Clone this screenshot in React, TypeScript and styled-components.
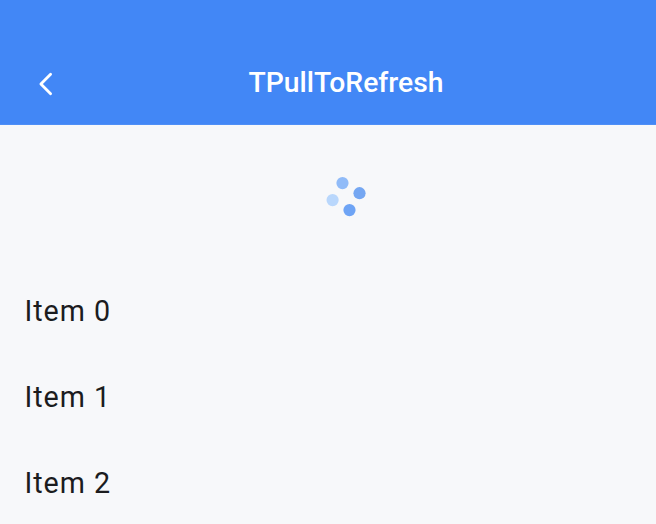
import React from "react";
import styled, { createGlobalStyle } from "styled-components";

const GlobalStyle = createGlobalStyle`
  * { box-sizing: border-box; }
  body { margin: 0; background: #f7f8fa; }
`;

const Screen = styled.div`
  width: 656px;
  height: 524px;
  overflow: hidden;
  background: #f7f8fa;
  font-family: Roboto, sans-serif;
`;

const AppBar = styled.header`
  display: grid;
  grid-template-columns: 92px 508px 56px;
  align-items: center;
  height: 125px;
  padding-top: 41px;
  border-bottom: 1px solid #4f8ff6;
  background: #4287f6;
  color: #fff;
`;

const BackButton = styled.button`
  display: flex;
  padding: 3px 0 0 36px;
  border: 0;
  background: none;
  color: inherit;
`;

const Title = styled.h1`
  margin: 0;
  font-size: 28.3px;
  font-weight: 500;
  line-height: 40px;
  text-align: center;
`;

const RefreshArea = styled.div`
  display: flex;
  justify-content: center;
  height: 143px;
  padding: 48px 0 0 36px;
`;

const List = styled.ul`
  margin: 0;
  padding: 0;
  list-style: none;
`;

const Item = styled.li`
  display: flex;
  align-items: center;
  height: 86px;
  padding-left: 24.4px;
  color: #1b1c1e;
  font-size: 28.7px;
  letter-spacing: 1px;
`;

export default function App() {
  return (
    <Screen>
      <GlobalStyle />
      <AppBar>
        <BackButton aria-label="Back">
          <svg width="20" height="26" viewBox="0 0 20 26" fill="none">
            <path
              d="M14.6 3.2 L4.9 13 L14.6 22.8"
              stroke="currentColor"
              strokeWidth="2.8"
              strokeLinecap="round"
              strokeLinejoin="round"
            />
          </svg>
        </BackButton>
        <Title>TPullToRefresh</Title>
      </AppBar>
      <RefreshArea>
        <svg width="48" height="48" viewBox="0 0 48 48">
          <circle cx="20.5" cy="10.1" r="6.1" fill="#90bbf8" />
          <circle cx="37.5" cy="20.2" r="6.1" fill="#75a7f2" />
          <circle cx="27.5" cy="37.1" r="6.1" fill="#6ea4f5" />
          <circle cx="10.6" cy="27.1" r="6.1" fill="#b9d7fc" />
        </svg>
      </RefreshArea>
      <List>
        {[0, 1, 2].map((n) => (
          <Item key={n}>Item {n}</Item>
        ))}
      </List>
    </Screen>
  );
}
